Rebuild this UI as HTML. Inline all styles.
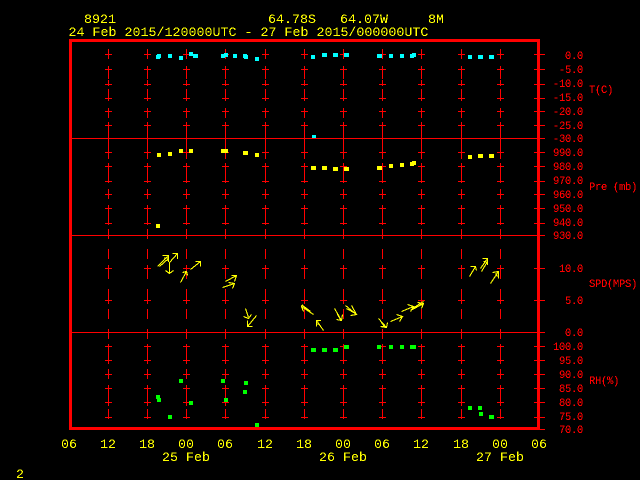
<!DOCTYPE html>
<html><head><meta charset="utf-8"><style>
html,body{margin:0;padding:0;background:#000;width:640px;height:480px;overflow:hidden}
svg{display:block}
text{font-family:"Liberation Mono",monospace;white-space:pre}
.y text{font-size:13.33px;fill:#ff0}
.r text{font-size:10.6px;letter-spacing:-.36px;fill:#f00}
</style></head><body>
<svg width="640" height="480" viewBox="0 0 640 480" xmlns="http://www.w3.org/2000/svg">
<defs>
<filter id="c" x="-5%" y="-5%" width="110%" height="110%" color-interpolation-filters="sRGB"><feComponentTransfer><feFuncA type="discrete" tableValues="0 1"/></feComponentTransfer></filter>
<filter id="d" x="-5%" y="-5%" width="110%" height="110%" color-interpolation-filters="sRGB"><feComponentTransfer><feFuncA type="discrete" tableValues="0 0 1 1 1"/></feComponentTransfer></filter>
<g id="col" stroke="#f00" fill="none">
<path d="M.5 49V59M.5 66V79M.5 80V86M.5 89V101M.5 108V118M.5 122V138M.5 138V149M.5 149V159M.5 163V183M.5 189V199M.5 205V225M.5 229V239M.5 249V259M.5 265V279M.5 289V304M.5 309V319M.5 329V339M.5 344V364M.5 369V379M.5 385V406M.5 409V419"/>
<path d="M-3 54.5h7M-3 69.5h7M-3 84.5h7M-3 98.5h7M-3 111.5h7M-3 125.5h7M-3 152.5h7M-3 166.5h7M-3 181.5h7M-3 194.5h7M-3 208.5h7M-3 223.5h7M-3 268.5h7M-3 300.5h7M-3 346.5h7M-3 360.5h7M-3 374.5h7M-3 388.5h7M-3 402.5h7M-3 417.5h7"/>
</g>
</defs>
<rect width="640" height="480" fill="#000"/>
<use href="#col" x="108"/><use href="#col" x="147"/><use href="#col" x="186"/><use href="#col" x="225"/><use href="#col" x="265"/><use href="#col" x="304"/><use href="#col" x="343"/><use href="#col" x="382"/><use href="#col" x="421"/><use href="#col" x="461"/><use href="#col" x="500"/>
<path stroke="#f00" fill="none" d="M72 138.5H545M72 235.5H545M72 332.5H545M534 54.5h11M534 69.5h11M534 84.5h11M534 98.5h11M534 111.5h11M534 125.5h11M534 152.5h11M534 166.5h11M534 181.5h11M534 194.5h11M534 208.5h11M534 223.5h11M534 268.5h11M534 300.5h11M534 346.5h11M534 360.5h11M534 374.5h11M534 388.5h11M534 402.5h11M534 417.5h11M534 429.5h11"/>
<path fill="#f00" d="M69 39H540V42H69ZM69 427H540V430H69ZM69 39H72V430H69ZM537 39H540V430H537Z"/>

<path fill="#0ff" d="M156 55h4v4h-4zM157 54h4v4h-4zM168 54h4v4h-4zM179 56h4v4h-4zM189 52h4v4h-4zM193 54h5v4h-5zM221 54h4v4h-4zM224 53h4v4h-4zM233 54h4v4h-4zM243 54h4v4h-4zM244 55h4v4h-4zM255 57h4v4h-4zM311 55h4v4h-4zM312 135h4v3h-4zM322 53h5v4h-5zM333 53h5v4h-5zM344 53h5v4h-5zM377 54h5v4h-5zM389 54h4v4h-4zM400 54h4v4h-4zM410 54h4v4h-4zM412 53h4v4h-4zM468 55h4v4h-4zM478 55h5v4h-5zM489 55h5v4h-5z"/>
<path fill="#ff0" d="M157 153h4v4h-4zM168 152h4v4h-4zM179 149h4v4h-4zM189 149h4v4h-4zM221 149h7v4h-7zM243 151h5v4h-5zM255 153h4v4h-4zM311 166h5v4h-5zM156 224h4v4h-4zM322 166h5v4h-5zM333 167h5v4h-5zM344 167h5v4h-5zM377 166h5v4h-5zM389 164h4v4h-4zM400 163h4v4h-4zM410 162h4v4h-4zM412 161h4v4h-4zM468 155h4v4h-4zM478 154h5v4h-5zM489 154h5v4h-5z"/>
<path fill="#0f0" d="M179 379h4v4h-4zM221 379h4v4h-4zM244 381h4v4h-4zM243 390h4v4h-4zM156 395h4v4h-4zM157 398h4v4h-4zM168 415h4v4h-4zM189 401h4v4h-4zM224 398h4v4h-4zM255 423h4v4h-4zM311 348h5v4h-5zM322 348h5v4h-5zM333 348h5v4h-5zM344 345h5v4h-5zM377 345h4v4h-4zM389 345h4v4h-4zM400 345h4v4h-4zM410 345h6v4h-6zM468 406h4v4h-4zM478 406h4v4h-4zM479 412h4v4h-4zM489 415h5v4h-5z"/>

<g fill="none" stroke="#ff0" stroke-width="1.1" shape-rendering="crispEdges">
<path d="M157.5 266.5L167.5 256.5M159.5 266.5L168.5 258.5M162.5 255.5H168.5V262M164 258h4v3"/>
<path d="M169.5 262.5L177.5 253.5M172.5 253.5H177.5V259"/>
<path d="M169.5 262.5V273.5M165.5 270.5L169.5 273.5L173.5 270.5"/>
<path d="M180.5 282.5L186.5 271.5M182.5 272.5L186.5 271.5L187.5 275.5"/>
<path d="M190.5 269.5L200.5 261.5M195.5 261.5H200.5V266.5"/>
<path d="M222.5 287.5L234.5 283.5M228.5 282.5L234.5 283.5L232.5 288.5"/>
<path d="M225.5 281.5L236.5 275.5M231.5 275.5L236.5 275.5L234.5 281.5"/>
<path d="M245.5 308.5L248.5 317.5M243.5 316.5L248.5 318.5L251.5 314.5"/>
<path d="M256.5 315.5L247.5 326.5M247.5 320.5V326.5H252.5M247.5 320.5V326.5"/>
<path d="M313.5 314.5L301.5 306.5M310.5 311.5L302.5 305.5M302.5 304.5L301.5 306.5L303.5 311.5"/>
<path d="M323.5 330.5L316.5 320.5M321 320.5H316.5V326.5M318 321.5V325"/>
<path d="M334.5 308.5L341.5 320.5M336.5 319.5L341.5 320.5L342.5 314.5M337.5 314.5L340.5 319.5"/>
<path d="M345.5 305.5L356.5 314.5M346.5 308.5L355.5 313.5M351.5 305.5L356.5 314.5L350.5 315.5"/>
<path d="M378.5 318.5L386.5 327.5M380.5 326.5L386.5 327.5L387.5 322.5M381.5 322.5L384.5 326.5M382.5 326.5h4"/>
<path d="M390.5 321.5L402.5 316.5M396.5 314.5L402.5 316.5L399.5 321.5"/>
<path d="M401.5 311.5L413.5 306.5M407.5 304.5L413.5 306.5L410.5 311.5"/>
<path d="M410.5 310.5L423.5 303.5M412.5 308.5L423.5 301.5M417.5 302.5L423.5 303.5L421.5 308.5M419.5 303.5L422.5 305.5"/>
<path d="M469.5 276.5L475.5 266.5M470.5 266.5L475.5 266.5L476.5 270.5"/>
<path d="M480.5 268.5L487.5 258.5M481.5 271.5L487.5 261.5M482.5 258.5H487.5V265M483.5 261.5L487.5 262.5"/>
<path d="M490.5 283.5L498.5 271.5M492.5 272.5L498.5 271.5V278.5M495.5 273.5L497.5 276.5"/>
</g>

<g class="y" filter="url(#c)">
<text x="84" y="23">8921</text>
<text x="268" y="23">64.78S</text>
<text x="340" y="23">64.07W</text>
<text x="428" y="23">8M</text>
<text x="68.5" y="36">24 Feb 2015/120000UTC - 27 Feb 2015/000000UTC</text>
<text x="61" y="448">06</text><text x="100" y="448">12</text><text x="139" y="448">18</text><text x="178" y="448">00</text><text x="217" y="448">06</text><text x="257" y="448">12</text><text x="296" y="448">18</text><text x="335" y="448">00</text><text x="374" y="448">06</text><text x="413" y="448">12</text><text x="453" y="448">18</text><text x="492" y="448">00</text><text x="531" y="448">06</text>
<text x="162" y="461">25 Feb</text><text x="319" y="461">26 Feb</text><text x="476" y="461">27 Feb</text>
<text x="16" y="478">2</text>
</g>
<g filter="url(#d)">
<g class="r" text-anchor="end">
<text x="583" y="59">0.0</text><text x="583" y="73">-5.0</text><text x="583" y="87">-10.0</text><text x="583" y="101">-15.0</text><text x="583" y="115">-20.0</text><text x="583" y="129">-25.0</text><text x="583" y="142">-30.0</text>
<text x="583" y="156">990.0</text><text x="583" y="170">980.0</text><text x="583" y="184">970.0</text><text x="583" y="198">960.0</text><text x="583" y="212">950.0</text><text x="583" y="226">940.0</text><text x="583" y="239">930.0</text>
<text x="583" y="272">10.0</text><text x="583" y="304">5.0</text><text x="583" y="336">0.0</text>
<text x="583" y="350">100.0</text><text x="583" y="364">95.0</text><text x="583" y="378">90.0</text><text x="583" y="392">85.0</text><text x="583" y="406">80.0</text><text x="583" y="420">75.0</text><text x="583" y="433">70.0</text>
</g>
<g class="r">
<text x="589" y="93">T(C)</text><text x="589" y="190">Pre (mb)</text><text x="589" y="287">SPD(MPS)</text><text x="589" y="384">RH(%)</text>
</g>
</g>
</svg>
</body></html>
